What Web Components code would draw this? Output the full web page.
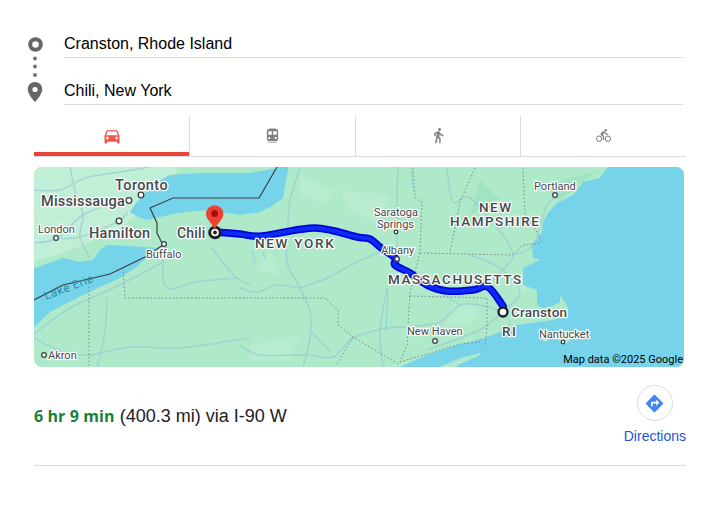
<!DOCTYPE html>
<html>
<head>
<meta charset="utf-8">
<style>
  html, body { margin: 0; background: #fff; }
  body { font-family: Roboto, Arial, "Liberation Sans", sans-serif; }
</style>
</head>
<body>
<directions-card>
  <route-inputs from="Cranston, Rhode Island" to="Chili, New York"></route-inputs>
  <travel-tabs></travel-tabs>
  <route-map></route-map>
  <route-summary duration="6 hr 9 min" detail="(400.3 mi) via I-90 W"></route-summary>
</directions-card>

<script>
class DirectionsCard extends HTMLElement {
  constructor() {
    super();
    this.attachShadow({mode: 'open'});
    this.shadowRoot.innerHTML = `
      <style>
        :host { display: block; width: 652px; padding: 26px 32px 0 34px; }
      </style>
      <slot></slot>`;
  }
}

class RouteInputs extends HTMLElement {
  constructor() {
    super();
    this.attachShadow({mode: 'open'});
  }

  connectedCallback() {
    this.shadowRoot.innerHTML = `
      <style>
        :host { display: flex; height: 79px; }
        .rail { flex: none; width: 38px; height: 70px; margin: 10px 0 0 -8px; }
        .fields { flex: none; width: 619px; display: flex; flex-direction: column; gap: 15px; }
        .field {
          height: 31px;
          border-bottom: 1px solid #dadce0;
          font: 16px/35px "Liberation Sans", Arial, sans-serif;
          color: #000;
        }
        svg { display: block; }
      </style>
      <svg class="rail" viewBox="26 36 38 70">
        <circle cx="35.500" cy="44.500" r="5.300" fill="none" stroke="#666" stroke-width="4"/>
        <circle cx="35" cy="58.500" r="2" fill="#70757a"/>
        <circle cx="35" cy="66.500" r="2" fill="#70757a"/>
        <circle cx="35" cy="75" r="2" fill="#70757a"/>
        <path d="M35 82c-4 0-7.200 3.100-7.200 7.200 0 5.300 7.200 12.800 7.200 12.800s7.200-7.500 7.200-12.800c0-4.100-3.200-7.200-7.200-7.200z" fill="#666"/>
        <circle cx="35" cy="89.500" r="2.600" fill="#fff"/>
      </svg>
      <div class="fields">
        <div class="field">${this.getAttribute('from')}</div>
        <div class="field">${this.getAttribute('to')}</div>
      </div>`;
  }
}

class TravelTabs extends HTMLElement {
  constructor() {
    super();
    this.attachShadow({mode: 'open'});
    this.shadowRoot.innerHTML = `
      <style>
        :host {
          display: grid;
          grid-template-columns: 156px 166px 165px 165px;
          height: 40px;
          margin-top: 11px;
          border-bottom: 1px solid #dadce0;
        }
        .tab {
          display: flex;
          align-items: center;
          justify-content: center;
          padding-bottom: 1px;
          border-right: 1px solid #dadce0;
          box-sizing: border-box;
        }
        .tab:last-child { border-right: 0; }
        .active { box-shadow: inset 0 -4px 0 #ea4335; }
        svg { width: 17px; height: 17px; fill: #7d8286; }
        .active svg { width: 20px; height: 20px; fill: #f0594d; }
        .bike svg { width: 15px; height: 15px; }
      </style>
      <div class="tab active">
        <svg viewBox="0 0 24 24"><path d="M18.920 6.010C18.720 5.420 18.160 5 17.500 5h-11c-.66 0-1.210.42-1.420 1.010L3 12v8c0 .55.45 1 1 1h1c.55 0 1-.45 1-1v-1h12v1c0 .55.45 1 1 1h1c.55 0 1-.45 1-1v-8l-2.080-5.990zM6.500 16c-.83 0-1.500-.67-1.500-1.500S5.670 13 6.500 13s1.500.67 1.500 1.500S7.330 16 6.500 16zm11 0c-.83 0-1.500-.67-1.500-1.500s.67-1.500 1.500-1.500 1.500.67 1.500 1.500-.67 1.500-1.500 1.500zM5 11l1.500-4.500h11L19 11H5z"/></svg>
      </div>
      <div class="tab">
        <svg viewBox="0 0 24 24"><path d="M12 2c-4.420 0-8 .5-8 4v10c0 .88.39 1.670 1 2.220V20h14v-1.780c.61-.55 1-1.340 1-2.220V6c0-3.500-3.580-4-8-4zM7.500 17c-.83 0-1.500-.67-1.500-1.500S6.670 14 7.500 14s1.500.67 1.500 1.500S8.330 17 7.500 17zm9 0c-.83 0-1.500-.67-1.500-1.500s.67-1.500 1.500-1.500 1.500.67 1.500 1.500-.67 1.500-1.500 1.500zM11 11H6V6h5v5zm7 0h-5V6h5v5zM6 21h12v1H6z"/></svg>
      </div>
      <div class="tab">
        <svg viewBox="0 0 24 24"><path d="M13.500 5.500c1.100 0 2-.9 2-2s-.9-2-2-2-2 .9-2 2 .9 2 2 2zM9.800 8.900L7 23h2.100l1.800-8 2.100 2v6h2v-7.500l-2.100-2 .6-3C14.800 12 16.800 13 19 13v-2c-1.900 0-3.500-1-4.300-2.400l-1-1.600c-.4-.6-1-1-1.700-1-.3 0-.5.100-.8.100L6 8.300V13h2V9.600l1.800-.7z"/></svg>
      </div>
      <div class="tab bike">
        <svg viewBox="0 0 24 24"><path d="M15.500 5.500c1.100 0 2-.9 2-2s-.9-2-2-2-2 .9-2 2 .9 2 2 2zM5 12c-2.800 0-5 2.200-5 5s2.200 5 5 5 5-2.200 5-5-2.200-5-5-5zm0 8.500c-1.900 0-3.500-1.600-3.500-3.500s1.600-3.500 3.500-3.500 3.500 1.600 3.500 3.500-1.600 3.500-3.500 3.500zm5.800-10l2.400-2.400.8.8c1.300 1.300 3 2.100 5.100 2.100V9c-1.500 0-2.700-.6-3.600-1.500l-1.900-1.900c-.5-.4-1-.6-1.600-.6s-1.100.2-1.400.6L7.800 8.400c-.4.400-.6.900-.6 1.400 0 .6.200 1.100.6 1.400L11 14v5h2v-6.200l-2.200-2.300zM19 12c-2.800 0-5 2.200-5 5s2.200 5 5 5 5-2.200 5-5-2.200-5-5-5zm0 8.500c-1.900 0-3.500-1.600-3.500-3.500s1.600-3.500 3.500-3.500 3.500 1.600 3.500 3.500-1.600 3.500-3.500 3.500z"/></svg>
      </div>`;
  }
}

// catmull-rom through the points, numbers are page pixels
function smooth(pts) {
  const n = pts.length;
  const at = (i) => pts[Math.max(0, Math.min(n - 1, i))];
  let d = `M${pts[0][0]} ${pts[0][1]}`;
  for (let i = 0; i < n - 1; i++) {
    const [p0, p1, p2, p3] = [at(i - 1), at(i), at(i + 1), at(i + 2)];
    const c1 = [p1[0] + (p2[0] - p0[0]) / 6, p1[1] + (p2[1] - p0[1]) / 6];
    const c2 = [p2[0] - (p3[0] - p1[0]) / 6, p2[1] - (p3[1] - p1[1]) / 6];
    d += `C${c1[0].toFixed(1)} ${c1[1].toFixed(1)} ${c2[0].toFixed(1)} ${c2[1].toFixed(1)} ${p2[0]} ${p2[1]}`;
  }
  return d;
}

const ontario = 'M130 212L136 203L143 195L155 183L170 175L200 173L250 173L277 168L277 160L290 160L285 185L283 198L272 206L260 212L240 215L207 210L177 213L160 217L147 220L138 217Z';
const erie = 'M30 270L63 258L80 262L93 260L100 250L107 245L125 246L143 247L156 248L150 255L135 268L120 278L100 287L83 295L65 304L50 312L30 331Z';
const ocean = 'M608 167L600 178L583 182L573 195L557 203L548 213L543 222L542 232L532 245L533 258L540 260L523 268L523 285L537 290L537 305L543 308L552 306L560 302L560 295L568 307L568 315L553 320L532 323L517 325L493 335L470 342L460 344L427 355L400 367L684 367L684 167Z';

const roads = [
  [[34, 243], [57, 238], [83, 215], [113, 203], [130, 200]],
  [[57, 238], [80, 237], [117, 222], [128, 212]],
  [[34, 190], [60, 190], [85, 178], [120, 172], [150, 167]],
  [[70, 167], [75, 190], [83, 215], [80, 237], [90, 258]],
  [[163, 262], [120, 285], [70, 308], [34, 334]],
  [[167, 245], [163, 262], [167, 288], [197, 282], [237, 278]],
  [[212, 248], [225, 265], [237, 278], [250, 285]],
  [[34, 338], [63, 352], [90, 355], [130, 347], [180, 348], [250, 338]],
  [[107, 298], [105, 332], [97, 367]],
  [[300, 168], [290, 200], [288, 222], [287, 262], [300, 288], [310, 312], [310, 338], [303, 367]],
  [[300, 288], [327, 278], [357, 262], [380, 252]],
  [[240, 288], [257, 292], [277, 285], [300, 288]],
  [[240, 345], [260, 355], [307, 355], [333, 357], [353, 338], [387, 328], [407, 327], [440, 322], [460, 305], [480, 305], [503, 312]],
  [[312, 332], [330, 352]],
  [[387, 288], [380, 332], [383, 367]],
  [[398, 167], [397, 198], [397, 232], [397, 262]],
  [[447, 168], [453, 202], [470, 198], [503, 235], [513, 255], [507, 265], [487, 285]],
  [[513, 255], [533, 245], [547, 205], [557, 197]],
  [[503, 312], [483, 328], [460, 338], [427, 350]],
  [[505, 310], [520, 292], [500, 268], [470, 255]],
  [[420, 278], [440, 292], [460, 305]]
];

const stateLines = [
  [[89, 283], [89, 367]],
  [[123, 268], [125, 298], [325, 298], [338, 310], [338, 325], [353, 337], [400, 365]],
  [[353, 337], [337, 364]],
  [[413, 168], [415, 198], [422, 202], [420, 252], [410, 292], [407, 345], [400, 362]],
  [[420, 253], [512, 255], [523, 245], [542, 243]],
  [[410, 296], [487, 298], [487, 328], [485, 347]],
  [[475, 168], [460, 202], [453, 238], [450, 253]],
  [[523, 168], [525, 215], [537, 232], [542, 242]],
  [[400, 362], [460, 344], [480, 342]]
];

const mapLabels = [
  ['Toronto', 115, 190, 14.5, 500, 0.4],
  ['Mississauga', 41, 206, 14.5, 500, 0.2],
  ['Hamilton', 89, 238, 14.5, 500, 0.3],
  ['London', 38, 233, 11, 400, 0],
  ['Buffalo', 146, 258, 11, 400, 0],
  ['Chili', 177, 238, 14, 500, 0.2],
  ['Akron', 48, 359, 11, 400, 0],
  ['NEW YORK', 255, 248, 13.5, 500, 1.7],
  ['Albany', 381, 254, 11, 400, 0],
  ['MASSACHUSETTS', 388, 284, 13.5, 500, 1.6],
  ['Portland', 534, 190, 11, 400, 0],
  ['New Haven', 407, 335, 11, 400, 0],
  ['Cranston', 511, 317, 13.5, 500, 0.2],
  ['RI', 502, 336, 13.5, 500, 1.6],
  ['Nantucket', 539, 338, 11, 400, 0]
];

class RouteMap extends HTMLElement {
  constructor() {
    super();
    this.attachShadow({mode: 'open'});
  }

  connectedCallback() {
    const labels = mapLabels.map(([t, x, y, s, w, ls]) =>
      `<text x="${x}" y="${y}" font-size="${s}" font-weight="${w}" letter-spacing="${ls}">${t}</text>`).join('');
    const route = smooth([[214, 232], [240, 234], [262, 236], [315, 228], [357, 237], [370, 239], [380, 247], [395, 258], [395, 265], [410, 273], [427, 285], [447, 291], [473, 290], [488, 287], [503, 306]]);
    this.shadowRoot.innerHTML = `
      <style>
        :host { display: block; width: 650px; height: 200px; margin-top: 10px; border-radius: 8px; overflow: hidden; position: relative; }
        svg { display: block; }
        .labels text { font-family: Roboto, sans-serif; fill: #45494d; stroke: #fff; stroke-width: 2.400px; stroke-linejoin: round; paint-order: stroke; }
        .attr { position: absolute; right: 1px; bottom: 1px; font: 11px Roboto, sans-serif; color: #000; line-height: 13px; }
      </style>
      <svg width="650" height="200" viewBox="34 167 650 200">
        <rect x="34" y="167" width="650" height="200" fill="#aee9ca"/>
        <path d="M34 167H180L150 205L115 232L70 250L34 262Z" fill="#c1eed8"/>
        <path d="M300 175L335 190L325 205L300 195ZM270 250L280 275L255 270ZM455 300L480 310L470 325L445 325ZM530 265L525 295L510 285ZM250 345L300 335L290 360L250 360ZM340 190L390 195L380 225L350 210Z" fill="#bcedd4" opacity=".7"/>
        <path d="M545 185L600 170L585 180L560 200ZM480 180L500 200L470 215Z" fill="#a2e4c1"/>
        <path d="${ontario}" fill="#76d3ea"/>
        <path d="${erie}" fill="#76d3ea"/>
        <path d="${ocean}" fill="#76d3ea"/>
        <path d="M460 364L478 356L481 353L460 358L440 367H455Z" fill="#aee9ca"/>
        <path d="M540 338L548 335L552 337L545 342ZM558 340L568 335L572 338L566 344Z" fill="#aee9ca"/>
        <g fill="none" stroke="#76d3ea" stroke-width="1" stroke-linecap="round" opacity=".8">
          <path d="M506 316L510 322L509 330"/>
          <path d="M252 252L255 262M263 252L265 258M411 168L413 190"/>
          <path d="M388 290L386 330"/>
        </g>
        <g fill="none" stroke="#9bc9d4" stroke-width="1.500" opacity=".7">
          ${roads.map((r) => `<path d="${smooth(r)}"/>`).join('')}
        </g>
        <g fill="none" stroke="#80888c" stroke-width="1" stroke-dasharray="1.500 2.200">
          ${stateLines.map((r) => `<path d="M${r.map((p) => p.join(' ')).join('L')}"/>`).join('')}
        </g>
        <path d="M34 300L63 285L110 274L145 257L163 245L157 233L157 223L150 208L173 198H259L277 167" fill="none" stroke="#3c4043" stroke-width="1.200"/>
        <text x="46" y="300" transform="rotate(-21 46 300)" font-family="Roboto, sans-serif" font-size="11.500" fill="#2c8da5" letter-spacing=".6">Lake Erie</text>
        <g fill="none" stroke-linejoin="round" stroke-linecap="round">
          <path d="${route}" stroke="#0000d8" stroke-width="7.500"/>
          <path d="${route}" stroke="#0a2cf5" stroke-width="4"/>
        </g>
        <g fill="#fff" stroke="#3c4043" stroke-width="1.300">
          <circle cx="141" cy="195" r="2.800"/>
          <circle cx="129" cy="200.500" r="2.800"/>
          <circle cx="119" cy="221" r="2.800"/>
          <circle cx="56" cy="238" r="2.300"/>
          <circle cx="164" cy="244" r="2.300"/>
          <circle cx="44" cy="355" r="2.300"/>
          <circle cx="397" cy="259" r="2.300"/>
          <circle cx="396" cy="232" r="1.800"/>
          <circle cx="435" cy="341" r="2.300"/>
          <circle cx="555" cy="195" r="2.300"/>
          <circle cx="563" cy="342" r="1.800"/>
        </g>
        <circle cx="215" cy="232.500" r="5.300" fill="#fff" stroke="#202124" stroke-width="3"/>
        <circle cx="215" cy="232.500" r="1.900" fill="#202124"/>
        <circle cx="503" cy="312" r="4.500" fill="#fff" stroke="#202124" stroke-width="2.400"/>
        <g class="labels">
          ${labels}
          <text font-size="11"><tspan x="374" y="216">Saratoga</tspan><tspan x="377" y="228">Springs</tspan></text>
          <text font-size="13.500" font-weight="500" letter-spacing="1.500"><tspan x="479" y="211.500">NEW</tspan><tspan x="450" y="225.500">HAMPSHIRE</tspan></text>
        </g>
        <path d="M214.700 230C213.500 224 206 220 206 214A8.700 8.700 0 0 1 223.400 214C223.400 220 216 224 214.700 230Z" fill="#ea4335"/>
        <circle cx="214.700" cy="213.500" r="3.400" fill="#a50e0e"/>
      </svg>
      <div class="attr">Map data ©2025 Google</div>`;
  }
}

class RouteSummary extends HTMLElement {
  constructor() {
    super();
    this.attachShadow({mode: 'open'});
  }

  connectedCallback() {
    this.shadowRoot.innerHTML = `
      <style>
        :host {
          display: flex;
          justify-content: space-between;
          align-items: flex-start;
          height: 99px;
          box-sizing: border-box;
          padding-top: 18px;
          border-bottom: 1px solid #dadce0;
        }
        .text { font: 18px/1 "Liberation Sans", Arial, sans-serif; color: #202124; padding-top: 22px; }
        b { color: #188038; font-family: "Open Sans", sans-serif; font-weight: 700; font-size: 16px; letter-spacing: .1px; }
        .action { display: flex; flex-direction: column; align-items: center; }
        .circle { width: 34px; height: 34px; border: 1px solid #dadce0; border-radius: 50%; display: flex; align-items: center; justify-content: center; }
        a { font: 14px/1 "Liberation Sans", Arial, sans-serif; color: #1a56d6; margin-top: 8px; }
      </style>
      <div class="text"><b>${this.getAttribute('duration')}</b> ${this.getAttribute('detail')}</div>
      <div class="action">
        <div class="circle">
          <svg width="21" height="21" viewBox="0 0 24 24"><path d="M21.700 11.300l-9-9a1 1 0 0 0-1.400 0l-9 9a1 1 0 0 0 0 1.400l9 9a1 1 0 0 0 1.400 0l9-9a1 1 0 0 0 0-1.400z" fill="#4285f4"/><path d="M14 14.500V12h-4v3H8v-4a1 1 0 0 1 1-1h5V7.500l3.500 3.500z" fill="#fff"/></svg>
        </div>
        <a>Directions</a>
      </div>`;
  }
}

customElements.define('directions-card', DirectionsCard);
customElements.define('route-inputs', RouteInputs);
customElements.define('travel-tabs', TravelTabs);
customElements.define('route-map', RouteMap);
customElements.define('route-summary', RouteSummary);
</script>
</body>
</html>
